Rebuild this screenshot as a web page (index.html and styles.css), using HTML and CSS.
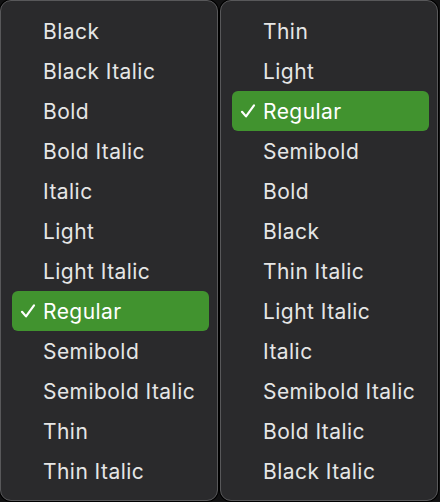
FILE: index.html
```html
<!DOCTYPE html>
<html>
<head>
<meta charset="utf-8">
<link rel="stylesheet" href="styles.css">
</head>
<body>
<div class="menus">
  <ul class="menu">
    <li class="item"><span class="check"></span><span class="label">Black</span></li>
    <li class="item"><span class="check"></span><span class="label">Black Italic</span></li>
    <li class="item"><span class="check"></span><span class="label">Bold</span></li>
    <li class="item"><span class="check"></span><span class="label">Bold Italic</span></li>
    <li class="item"><span class="check"></span><span class="label">Italic</span></li>
    <li class="item"><span class="check"></span><span class="label">Light</span></li>
    <li class="item"><span class="check"></span><span class="label">Light Italic</span></li>
    <li class="item selected"><span class="check"><svg viewBox="0 0 16 16" width="16" height="16"><path d="M2 8.8 L6 13.4 L14 2.4" /></svg></span><span class="label">Regular</span></li>
    <li class="item"><span class="check"></span><span class="label">Semibold</span></li>
    <li class="item"><span class="check"></span><span class="label">Semibold Italic</span></li>
    <li class="item"><span class="check"></span><span class="label">Thin</span></li>
    <li class="item"><span class="check"></span><span class="label">Thin Italic</span></li>
  </ul>
  <ul class="menu">
    <li class="item"><span class="check"></span><span class="label">Thin</span></li>
    <li class="item"><span class="check"></span><span class="label">Light</span></li>
    <li class="item selected"><span class="check"><svg viewBox="0 0 16 16" width="16" height="16"><path d="M2 8.8 L6 13.4 L14 2.4" /></svg></span><span class="label">Regular</span></li>
    <li class="item"><span class="check"></span><span class="label">Semibold</span></li>
    <li class="item"><span class="check"></span><span class="label">Bold</span></li>
    <li class="item"><span class="check"></span><span class="label">Black</span></li>
    <li class="item"><span class="check"></span><span class="label">Thin Italic</span></li>
    <li class="item"><span class="check"></span><span class="label">Light Italic</span></li>
    <li class="item"><span class="check"></span><span class="label">Italic</span></li>
    <li class="item"><span class="check"></span><span class="label">Semibold Italic</span></li>
    <li class="item"><span class="check"></span><span class="label">Bold Italic</span></li>
    <li class="item"><span class="check"></span><span class="label">Black Italic</span></li>
  </ul>
</div>
</body>
</html>
```

FILE: styles.css
```css
html, body {
  margin: 0;
  padding: 0;
  background: #111112;
}

body {
  width: 440px;
  height: 502px;
  overflow: hidden;
  font-family: Inter, "Noto Sans", "Liberation Sans", sans-serif;
}

.menus {
  display: flex;
  gap: 2px;
}

.menu {
  list-style: none;
  margin: 0;
  box-sizing: border-box;
  width: 218px;
  height: 501px;
  padding: 10px 8px 9px 11px;
  background: #2a2a2c;
  border: 1px solid #58585a;
  border-radius: 11px;
  box-shadow: 0 0 0 1px #000;
  display: flex;
  flex-direction: column;
}

.item {
  height: 40px;
  display: flex;
  align-items: center;
  padding-left: 8px;
  gap: 7px;
  border-radius: 6px;
  color: #e6e6e6;
  font-size: 21px;
  letter-spacing: 0.45px;
}

.check {
  width: 16px;
  height: 16px;
  display: flex;
}

.check svg path {
  fill: none;
  stroke: #ffffff;
  stroke-width: 2.2;
  stroke-linecap: round;
  stroke-linejoin: round;
}

.selected {
  background: #41932f;
  color: #ffffff;
}
```
